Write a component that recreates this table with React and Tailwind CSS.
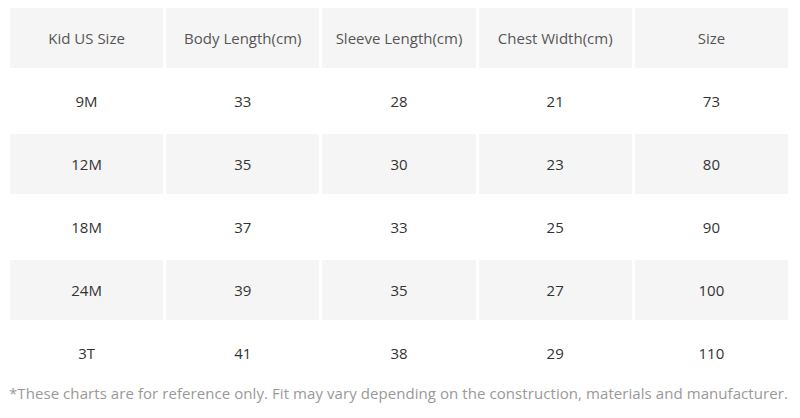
import React from 'react';

const header = ['Kid US Size', 'Body Length(cm)', 'Sleeve Length(cm)', 'Chest Width(cm)', 'Size'];

const rows = [
  ['9M', '33', '28', '21', '73'],
  ['12M', '35', '30', '23', '80'],
  ['18M', '37', '33', '25', '90'],
  ['24M', '39', '35', '27', '100'],
  ['3T', '41', '38', '29', '110'],
];

export default function App() {
  return (
    <div className="w-[800px] h-[418px] bg-white font-['Open_Sans',sans-serif] overflow-hidden">
      <div className="pt-[8px] pl-[10px] w-[788px]">
        <div className="grid grid-cols-5 gap-[3px]">
          {header.map((h) => (
            <div key={h} className="h-[60px] flex items-center justify-center bg-[#f5f5f5] text-[15px] text-[#555]">
              {h}
            </div>
          ))}
          {rows.map((r, i) =>
            r.map((c, j) => (
              <div
                key={i + '-' + j}
                className={
                  'h-[60px] flex items-center justify-center text-[15px] text-[#333] ' +
                  (i % 2 === 1 ? 'bg-[#f5f5f5]' : 'bg-white')
                }
              >
                {c}
              </div>
            ))
          )}
        </div>
      </div>
      <p className="pl-[9px] leading-[20px] text-[15px] tracking-[0.07px] text-[#999] whitespace-nowrap">
        *These charts are for reference only. Fit may vary depending on the construction, materials and manufacturer.
      </p>
    </div>
  );
}
